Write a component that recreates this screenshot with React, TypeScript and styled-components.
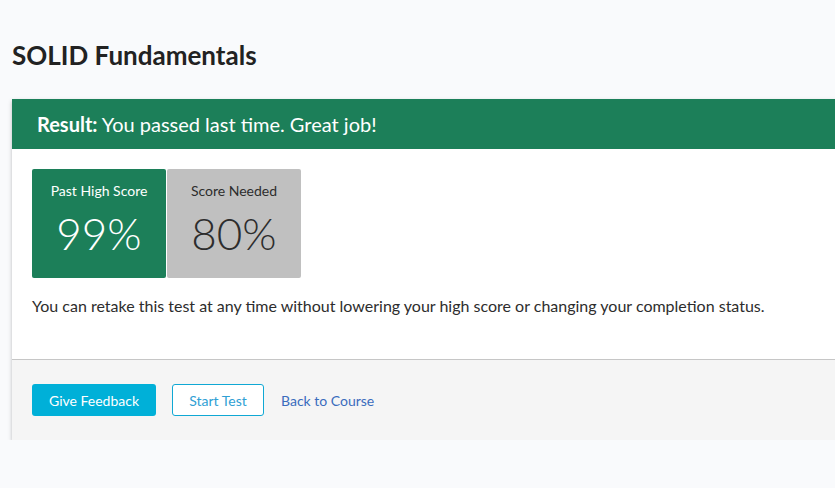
import * as React from 'react';
import styled, { createGlobalStyle } from 'styled-components';

const GlobalStyle = createGlobalStyle`
  html, body {
    margin: 0;
    padding: 0;
    background: #f9fafc;
    overflow: hidden;
  }

  body {
    font-family: Lato, 'Open Sans', Arial, sans-serif;
    color: #2d2d2d;
  }
`;

interface Score {
  label: string;
  value: string;
  passed?: boolean;
}

const scores: Score[] = [
  { label: 'Past High Score', value: '99%', passed: true },
  { label: 'Score Needed', value: '80%' },
];

const App: React.FC = () => (
  <Page>
    <GlobalStyle />
    <Title>SOLID Fundamentals</Title>
    <Card>
      <ResultBar>
        <strong>Result:</strong> You passed last time. Great job!
      </ResultBar>
      <CardBody>
        <ScoreRow>
          {scores.map(score => (
            <ScoreBox key={score.label} passed={score.passed}>
              <ScoreLabel>{score.label}</ScoreLabel>
              <ScoreValue>{score.value}</ScoreValue>
            </ScoreBox>
          ))}
        </ScoreRow>
        <Note>
          You can retake this test at any time without lowering your high
          score or changing your completion status.
        </Note>
      </CardBody>
      <Footer>
        <PrimaryButton>Give Feedback</PrimaryButton>
        <OutlineButton>Start Test</OutlineButton>
        <TextLink href="#">Back to Course</TextLink>
      </Footer>
    </Card>
  </Page>
);

export default App;

const Page = styled.div`
  padding: 40px 0 0 12px;
  width: 860px;
`;

const Title = styled.h1`
  margin: 0 0 29px;
  font-size: 26px;
  line-height: 30px;
  font-weight: 700;
  color: #222;
`;

const Card = styled.section`
  background: #fff;
  box-shadow: 0 2px 4px rgba(0, 0, 0, 0.25);
`;

const ResultBar = styled.div`
  height: 50px;
  box-sizing: border-box;
  padding: 0 25px;
  display: flex;
  align-items: center;
  background: #1c7f59;
  color: #fff;
  font-size: 20px;
  white-space: pre;

  strong {
    font-weight: 700;
  }
`;

const CardBody = styled.div`
  padding: 20px 20px 0;
  height: 211px;
  box-sizing: border-box;
  border-bottom: 1px solid #c6c6c6;
`;

const ScoreRow = styled.div`
  display: flex;
  gap: 1px;
`;

const ScoreBox = styled.div<{ passed?: boolean }>`
  width: 134px;
  height: 109px;
  box-sizing: border-box;
  border-radius: 2px;
  padding-top: 14px;
  display: flex;
  flex-direction: column;
  align-items: center;
  background: ${p => (p.passed ? '#1c7f59' : '#c0c0c0')};
  color: ${p => (p.passed ? '#fff' : '#2d2d2d')};
`;

const ScoreLabel = styled.div`
  font-size: 14px;
  line-height: 16px;
`;

const ScoreValue = styled.div`
  margin-top: 8px;
  font-size: 44px;
  line-height: 52px;
  font-weight: 300;
`;

const Note = styled.p`
  margin: 17px 0 0;
  font-size: 16px;
  line-height: 22px;
`;

const Footer = styled.div`
  height: 80px;
  box-sizing: border-box;
  padding: 0 20px;
  display: flex;
  align-items: center;
  background: #f5f5f5;
`;

const PrimaryButton = styled.button`
  height: 32px;
  width: 124px;
  border: none;
  border-radius: 3px;
  background: #00b0d8;
  color: #fff;
  font-family: inherit;
  font-size: 14px;
  cursor: pointer;
`;

const OutlineButton = styled.button`
  margin-left: 16px;
  height: 32px;
  width: 92px;
  border: 1px solid #10a8d4;
  border-radius: 3px;
  background: #fff;
  color: #2fa0d4;
  font-family: inherit;
  font-size: 14px;
  cursor: pointer;
`;

const TextLink = styled.a`
  margin-left: 17px;
  color: #3a6cbd;
  font-size: 14px;
  text-decoration: none;
`;
